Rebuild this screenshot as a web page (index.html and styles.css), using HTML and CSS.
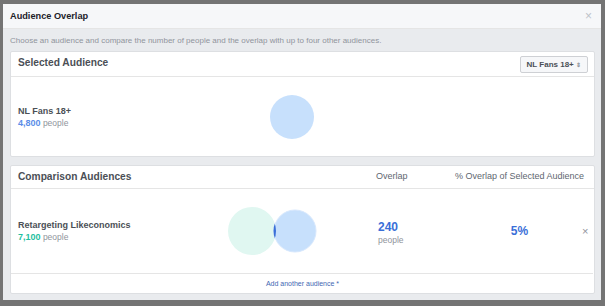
FILE: index.html
```html
<!DOCTYPE html>
<html lang="en">
<head>
  <meta charset="UTF-8">
  <title>Audience Overlap</title>
  <link rel="stylesheet" href="styles.css">
</head>
<body>
  <div class="modal">
    <div class="modal-header">
      <span class="modal-title">Audience Overlap</span>
      <span class="close">&times;</span>
    </div>
    <div class="modal-body">
      <p class="intro">Choose an audience and compare the number of people and the overlap with up to four other audiences.</p>

      <div class="card">
        <div class="card-header">
          <span class="card-title">Selected Audience</span>
          <button class="select">NL Fans 18+ <span class="caret">&#8661;</span></button>
        </div>
        <div class="row selected-row">
          <div class="audience">
            <div class="name">NL Fans 18+</div>
            <div class="size"><span class="num blue">4,800</span> people</div>
          </div>
          <svg class="venn" width="90" height="48" viewBox="0 0 90 48">
            <circle cx="64" cy="24" r="22" fill="#c7e0fc"/>
          </svg>
        </div>
      </div>

      <div class="card">
        <div class="card-header cols">
          <span class="card-title">Comparison Audiences</span>
          <span class="col-label">Overlap</span>
          <span class="col-label center">% Overlap of Selected Audience</span>
        </div>
        <div class="row compare-row">
          <div class="audience">
            <div class="name">Retargeting Likeconomics</div>
            <div class="size"><span class="num green">7,100</span> people</div>
          </div>
          <svg class="venn" width="90" height="50" viewBox="0 0 90 50">
            <defs>
              <clipPath id="clip-green">
                <circle cx="24" cy="25" r="24"/>
              </clipPath>
            </defs>
            <circle cx="24" cy="25" r="24" fill="#e0f7f1"/>
            <circle cx="67" cy="25" r="21" fill="#c7e0fc" stroke="#d7e8fd" stroke-width="1"/>
            <circle cx="67" cy="25" r="21.5" fill="#3a6fd8" clip-path="url(#clip-green)"/>
          </svg>
          <div class="overlap">
            <div class="big">240</div>
            <div class="unit">people</div>
          </div>
          <div class="pct big">5%</div>
          <span class="remove">&times;</span>
        </div>
        <div class="card-footer">
          <a href="#" class="add-link">Add another audience *</a>
        </div>
      </div>
    </div>
  </div>
</body>
</html>
```

FILE: styles.css
```css
body {
  margin: 0;
  padding: 4px 4px 0 3px;
  background-color: #747474;
  font-family: 'Liberation Sans', Arial, sans-serif;
  color: #4b4f56;
}
.modal {
  width: 598px;
  height: 296px;
  background-color: #e9ebee;
  display: flex;
  flex-direction: column;
}
.modal-header {
  flex-shrink: 0;
  height: 24px;
  background-color: #f6f7f9;
  border-bottom: 1px solid #e5e5e5;
  display: flex;
  align-items: center;
  justify-content: space-between;
  padding: 0 9px 0 7px;
}
.modal-title {
  font-size: 9.2px;
  font-weight: bold;
  color: #1d2129;
}
.close {
  font-size: 12px;
  color: #bec2c9;
}
.modal-body {
  flex: 1;
  padding: 0 6px 0 7px;
}
.intro {
  margin: 7px 0 5px;
  font-size: 8px;
  line-height: 10px;
  color: #90949c;
}
.card {
  background-color: #fff;
  border: 1px solid #dddfe2;
  border-radius: 2px;
  margin-bottom: 8px;
}
.card-header {
  height: 21px;
  padding: 0 6px 3px 7px;
  border-bottom: 1px solid #e5e5e5;
  display: flex;
  align-items: center;
  justify-content: space-between;
}
.card-title {
  font-size: 10.2px;
  font-weight: bold;
  color: #4b4f56;
}
.select {
  height: 17px;
  margin-top: 3px;
  padding: 0 6px 0 6px;
  border: 1px solid #ced0d4;
  border-radius: 2px;
  background-color: #f6f7f9;
  font-family: inherit;
  font-size: 8px;
  font-weight: bold;
  color: #4b4f56;
}
.caret {
  font-size: 6px;
  color: #90949c;
}
.card-header.cols {
  height: 20px;
  padding-bottom: 2px;
  display: grid;
  justify-content: start;
  grid-template-columns: 358px 79px 129px;
}
.col-label {
  font-size: 9px;
  color: #606770;
  white-space: nowrap;
}
.col-label.center {
  text-align: center;
}
.row {
  display: grid;
  grid-template-columns: 210px 90px;
  align-items: center;
  padding-left: 7px;
}
.selected-row {
  height: 79px;
}
.compare-row {
  height: 84px;
  grid-template-columns: 210px 150px 77px 129px 1fr;
  border-bottom: 1px solid #e5e5e5;
  margin: 0 1px 0 0;
}
.name {
  font-size: 9px;
  font-weight: bold;
  color: #4b4f56;
  line-height: 12px;
}
.size {
  font-size: 8.5px;
  color: #90949c;
  line-height: 12px;
}
.num {
  font-size: 9px;
  font-weight: bold;
}
.num.blue {
  color: #5b8de8;
}
.num.green {
  color: #1fbf9f;
}
.venn {
  display: block;
}
.overlap {
  padding-top: 3px;
}
.big {
  font-size: 12px;
  font-weight: bold;
  color: #3a6fd8;
  line-height: 14px;
}
.unit {
  font-size: 8.5px;
  color: #90949c;
  line-height: 12px;
}
.pct {
  text-align: center;
}
.remove {
  margin-left: -2px;
  font-size: 11px;
  color: #90949c;
}
.card-footer {
  height: 19px;
  display: flex;
  align-items: center;
  justify-content: center;
}
.add-link {
  font-size: 7px;
  color: #4267b2;
  text-decoration: none;
}
```
